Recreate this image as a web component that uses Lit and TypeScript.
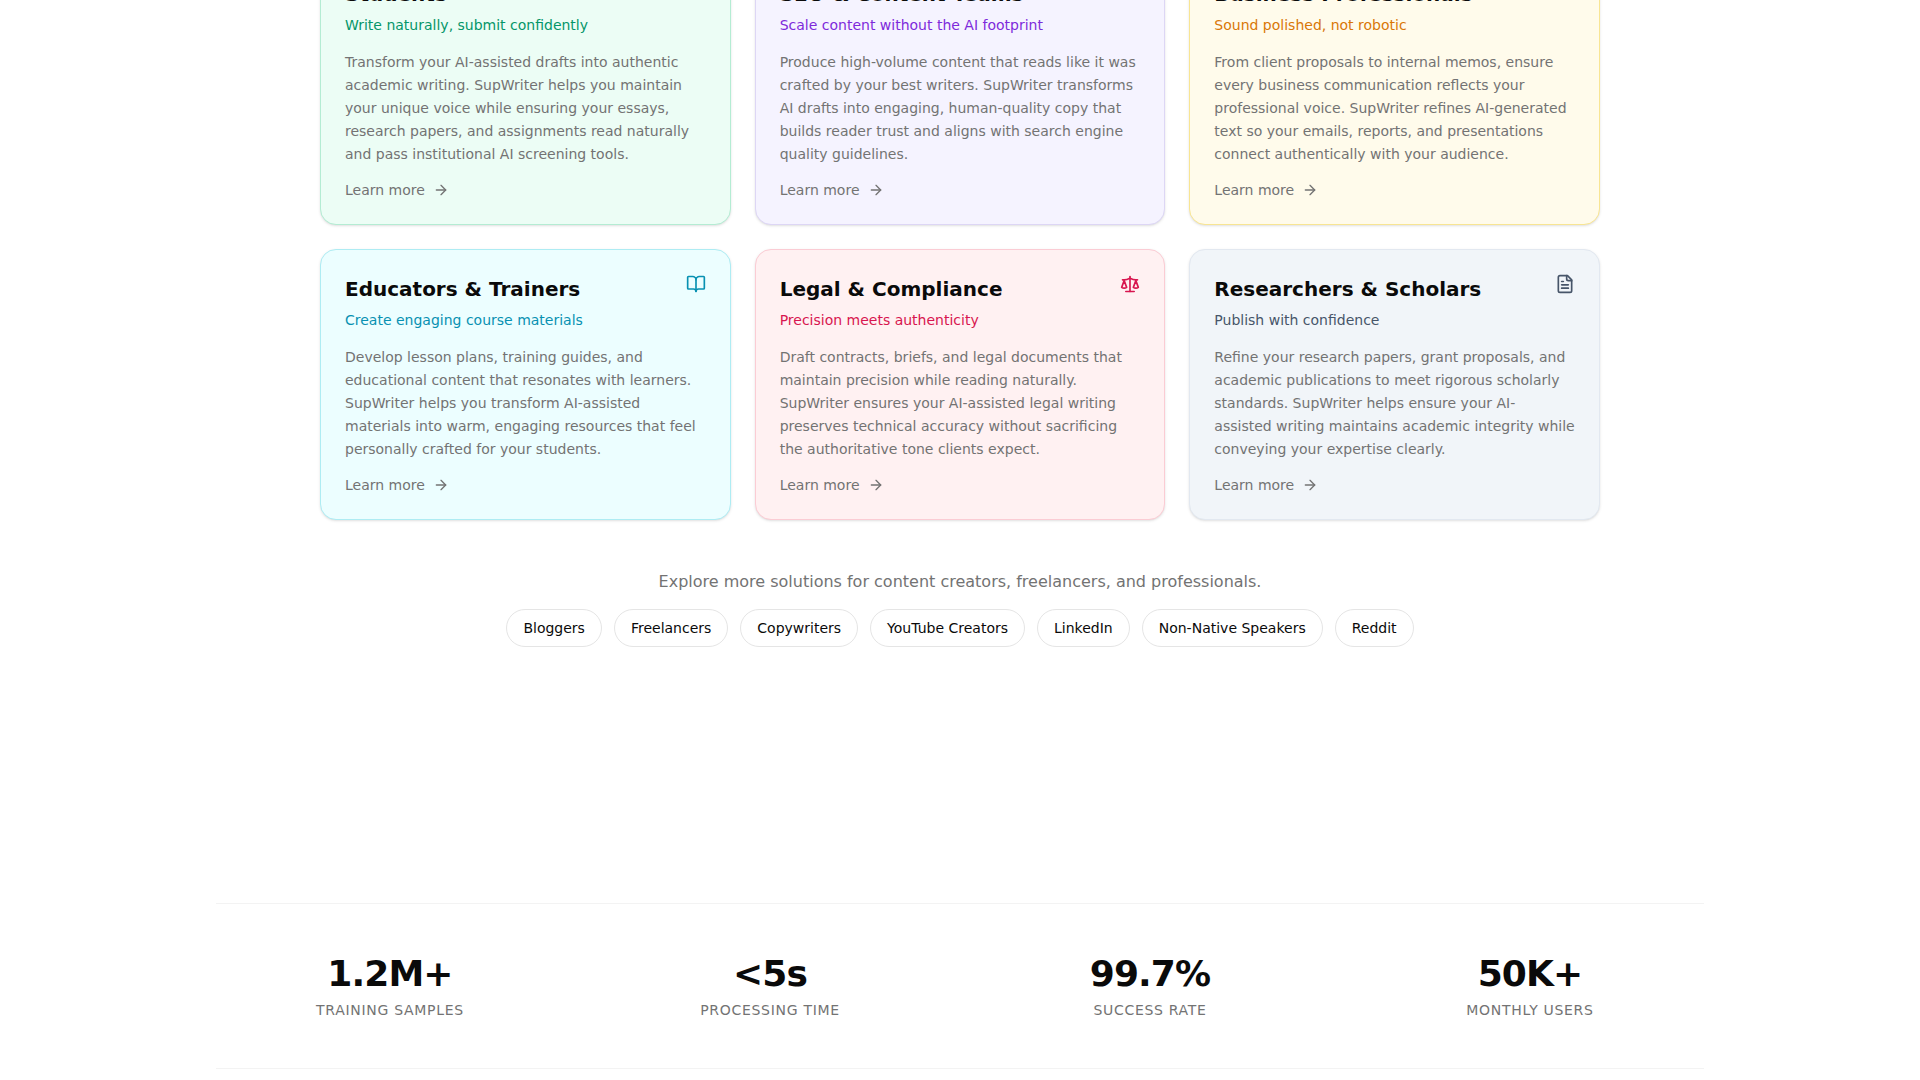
import { LitElement, html, css, svg } from "lit";
import { customElement, property } from "lit/decorators.js";

type IconName = "graduation" | "trending" | "briefcase" | "book" | "scale" | "file" | "arrow";

const ICONS: Record<IconName, unknown> = {
  graduation: svg`<path d="M21.42 10.922a1 1 0 0 0-.019-1.838L12.83 5.18a2 2 0 0 0-1.66 0L2.6 9.08a1 1 0 0 0 0 1.832l8.57 3.908a2 2 0 0 0 1.66 0z"/><path d="M22 10v6"/><path d="M6 12.5V16a6 3 0 0 0 12 0v-3.5"/>`,
  trending: svg`<path d="M16 7h6v6"/><path d="m22 7-8.5 8.5-5-5L2 17"/>`,
  briefcase: svg`<path d="M16 20V4a2 2 0 0 0-2-2h-4a2 2 0 0 0-2 2v16"/><rect width="20" height="14" x="2" y="6" rx="2"/>`,
  book: svg`<path d="M12 7v14"/><path d="M3 18a1 1 0 0 1-1-1V4a1 1 0 0 1 1-1h5a4 4 0 0 1 4 4 4 4 0 0 1 4-4h5a1 1 0 0 1 1 1v13a1 1 0 0 1-1 1h-6a3 3 0 0 0-3 3 3 3 0 0 0-3-3z"/>`,
  scale: svg`<path d="m16 16 3-8 3 8c-.87.65-1.92 1-3 1s-2.13-.35-3-1Z"/><path d="m2 16 3-8 3 8c-.87.65-1.92 1-3 1s-2.13-.35-3-1Z"/><path d="M7 21h10"/><path d="M12 3v18"/><path d="M3 7h2c2 0 5-1 7-2 2 1 5 2 7 2h2"/>`,
  file: svg`<path d="M15 2H6a2 2 0 0 0-2 2v16a2 2 0 0 0 2 2h12a2 2 0 0 0 2-2V7Z"/><path d="M14 2v4a2 2 0 0 0 2 2h4"/><path d="M10 9H8"/><path d="M16 13H8"/><path d="M16 17H8"/>`,
  arrow: svg`<path d="M5 12h14"/><path d="m12 5 7 7-7 7"/>`,
};

const icon = (name: IconName) => html`
  <svg class="icon icon-${name}" viewBox="0 0 24 24" fill="none" stroke="currentColor"
    stroke-width="2" stroke-linecap="round" stroke-linejoin="round" aria-hidden="true">${ICONS[name]}</svg>`;

interface Solution {
  tone: string;
  icon: IconName;
  title: string;
  tagline: string;
  body: string;
}

const SOLUTIONS: Solution[] = [
  {
    tone: "emerald",
    icon: "graduation",
    title: "Students",
    tagline: "Write naturally, submit confidently",
    body: "Transform your AI-assisted drafts into authentic academic writing. SupWriter helps you maintain your unique voice while ensuring your essays, research papers, and assignments read naturally and pass institutional AI screening tools.",
  },
  {
    tone: "violet",
    icon: "trending",
    title: "SEO & Content Teams",
    tagline: "Scale content without the AI footprint",
    body: "Produce high-volume content that reads like it was crafted by your best writers. SupWriter transforms AI drafts into engaging, human-quality copy that builds reader trust and aligns with search engine quality guidelines.",
  },
  {
    tone: "amber",
    icon: "briefcase",
    title: "Business Professionals",
    tagline: "Sound polished, not robotic",
    body: "From client proposals to internal memos, ensure every business communication reflects your professional voice. SupWriter refines AI-generated text so your emails, reports, and presentations connect authentically with your audience.",
  },
  {
    tone: "cyan",
    icon: "book",
    title: "Educators & Trainers",
    tagline: "Create engaging course materials",
    body: "Develop lesson plans, training guides, and educational content that resonates with learners. SupWriter helps you transform AI-assisted materials into warm, engaging resources that feel personally crafted for your students.",
  },
  {
    tone: "rose",
    icon: "scale",
    title: "Legal & Compliance",
    tagline: "Precision meets authenticity",
    body: "Draft contracts, briefs, and legal documents that maintain precision while reading naturally. SupWriter ensures your AI-assisted legal writing preserves technical accuracy without sacrificing the authoritative tone clients expect.",
  },
  {
    tone: "slate",
    icon: "file",
    title: "Researchers & Scholars",
    tagline: "Publish with confidence",
    body: "Refine your research papers, grant proposals, and academic publications to meet rigorous scholarly standards. SupWriter helps ensure your AI-\nassisted writing maintains academic integrity while conveying your expertise clearly.",
  },
];

const MORE = ["Bloggers", "Freelancers", "Copywriters", "YouTube Creators", "LinkedIn", "Non-Native Speakers", "Reddit"];

const STATS = [
  { value: "1.2M+", label: "Training samples" },
  { value: "<5s", label: "Processing time" },
  { value: "99.7%", label: "Success rate" },
  { value: "50K+", label: "Monthly users" },
];

@customElement("solution-card")
export class SolutionCard extends LitElement {
  static styles = css`
    :host {
      display: block;
    }
    .card {
      box-sizing: border-box;
      display: flex;
      flex-direction: column;
      height: 100%;
      padding: 24px;
      border: 1px solid var(--edge);
      border-radius: 16px;
      background: var(--fill);
      box-shadow: 0 1px 3px rgb(0 0 0 / 10%), 0 1px 2px -1px rgb(0 0 0 / 10%);
      color: #737373;
      font-size: 14px;
      line-height: 20px;
      text-decoration: none;
    }
    .emerald { --fill: #ecfdf5; --edge: #b4ecd3; --accent: #059669; }
    .violet { --fill: #f5f3ff; --edge: #ddd6f5; --accent: #7e2adb; }
    .amber { --fill: #fffbeb; --edge: #f8e593; --accent: #d97706; }
    .cyan { --fill: #ecfeff; --edge: #aeecf3; --accent: #0891b2; }
    .rose { --fill: #fff1f2; --edge: #fbccd4; --accent: #d8164f; }
    .slate { --fill: #f1f5f9; --edge: #e2e8f0; --accent: #475569; }
    .head {
      display: flex;
      align-items: flex-start;
      justify-content: space-between;
      gap: 16px;
    }
    .title {
      margin: 0;
      color: #0a0a0a;
      font-size: 20px;
      font-weight: 700;
      line-height: 30px;
    }
    .icon {
      display: block;
      flex: none;
      width: 20px;
      height: 20px;
      color: var(--accent);
    }
    .icon-arrow {
      width: 16px;
      height: 16px;
      color: inherit;
    }
    .tagline {
      margin: 6px 0 0;
      color: var(--accent);
    }
    .body {
      margin: 16px 0 14px;
      line-height: 23px;
      white-space: pre-line;
    }
    .more {
      display: flex;
      align-items: center;
      gap: 8px;
      margin-top: auto;
    }
  `;

  @property({ attribute: false }) solution!: Solution;

  render() {
    const s = this.solution;
    return html`
      <a class="card ${s.tone}" href="#${s.tone}">
        <div class="head">
          <h3 class="title">${s.title}</h3>
          ${icon(s.icon)}
        </div>
        <p class="tagline">${s.tagline}</p>
        <p class="body">${s.body}</p>
        <span class="more">Learn more ${icon("arrow")}</span>
      </a>
    `;
  }
}

@customElement("app-root")
export class AppRoot extends LitElement {
  static styles = css`
    :host {
      display: flow-root;
      min-height: 100vh;
      overflow: hidden;
      box-sizing: border-box;
      background: #fff;
      color: #0a0a0a;
      font-family: "DejaVu Sans", sans-serif;
    }
    .solutions {
      max-width: 1280px;
      margin: -46px auto 0;
      padding: 0 24px;
    }
    .cards {
      display: grid;
      grid-template-columns: repeat(3, minmax(0, 1fr));
      gap: 24px;
    }
    .explore {
      margin: 48px 0 14px;
      color: #737373;
      font-size: 16px;
      line-height: 27px;
      text-align: center;
    }
    .pills {
      display: flex;
      flex-wrap: wrap;
      justify-content: center;
      gap: 12px;
      margin: 0;
      padding: 0;
      list-style: none;
    }
    .pill {
      display: block;
      padding: 8px 16px;
      border: 1px solid #e5e5e5;
      border-radius: 20px;
      color: #0a0a0a;
      font-size: 14px;
      line-height: 20px;
      text-decoration: none;
    }
    .stats {
      display: grid;
      grid-template-columns: repeat(4, minmax(0, 1fr));
      gap: 32px;
      max-width: 1488px;
      margin: 256px auto 0;
      padding: 48px 0;
      border-top: 1px solid #f3f3f3;
      border-bottom: 1px solid #f3f3f3;
      text-align: center;
    }
    .stat {
      display: flex;
      flex-direction: column;
      gap: 4px;
    }
    .value {
      font-size: 36px;
      font-weight: 700;
      line-height: 44px;
      letter-spacing: -0.025em;
    }
    .label {
      color: #737373;
      font-size: 14px;
      line-height: 20px;
      letter-spacing: 0.05em;
      text-transform: uppercase;
    }
  `;

  render() {
    return html`
      <main>
        <section class="solutions">
          <div class="cards">
            ${SOLUTIONS.map((s) => html`<solution-card .solution=${s}></solution-card>`)}
          </div>
          <p class="explore">Explore more solutions for content creators, freelancers, and professionals.</p>
          <ul class="pills">
            ${MORE.map((name) => html`<li><a class="pill" href="#more">${name}</a></li>`)}
          </ul>
        </section>
        <section class="stats">
          ${STATS.map(
            (s) => html`<div class="stat"><span class="value">${s.value}</span><span class="label">${s.label}</span></div>`,
          )}
        </section>
      </main>
    `;
  }
}
